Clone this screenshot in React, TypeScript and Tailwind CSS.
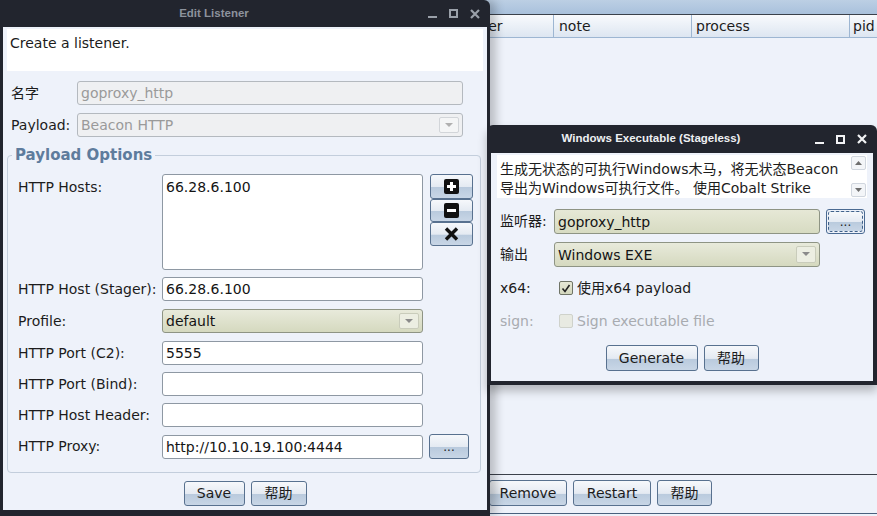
import { ReactNode } from "react";
import clsx from "clsx";
import { twMerge } from "tailwind-merge";

const cn = (...args: Parameters<typeof clsx>) => twMerge(clsx(...args));

const btnBg =
  "bg-[linear-gradient(to_bottom,#f6f8fb_0%,#e4eaf2_52%,#b9cadd_53%,#c8d6e6_100%)]";

const Btn = ({ children, className }: { children: ReactNode; className?: string }) => (
  <div
    className={cn(
      "flex h-[26px] items-center justify-center rounded-[3px] border border-[#58718f] text-[14px] text-[#1c1c1c]",
      btnBg,
      className
    )}
  >
    {children}
  </div>
);

const Field = ({
  value,
  className,
  disabled,
  olive,
}: {
  value?: string;
  className?: string;
  disabled?: boolean;
  olive?: boolean;
}) => (
  <div
    className={cn(
      "flex h-[24px] items-center rounded-[3px] border px-[3px] text-[14px] leading-none",
      disabled
        ? "border-[#b4b9bf] bg-[#eff0f2] text-[#9a9a9a]"
        : olive
        ? "border-[#8e9484] bg-[linear-gradient(to_bottom,#e6e8d6,#d7dbc2)] text-[#141414]"
        : "border-[#8e98a3] bg-white text-[#141414]",
      className
    )}
  >
    {value}
  </div>
);

const Combo = ({
  value,
  className,
  disabled,
}: {
  value: string;
  className?: string;
  disabled?: boolean;
}) => (
  <div
    className={cn(
      "flex h-[24px] items-stretch rounded-[3px] border text-[14px] leading-none",
      disabled
        ? "border-[#b4b9bf] bg-[#eff0f2] text-[#9a9a9a]"
        : "border-[#8e9484] bg-[linear-gradient(to_bottom,#e8eadb,#d5d9bf)] text-[#141414]",
      className
    )}
  >
    <div className="flex flex-1 items-center px-[3px]">{value}</div>
    <div
      className={clsx(
        "my-[3px] mr-[3px] flex w-[20px] items-center justify-center rounded-[2px] border",
        disabled ? "border-[#d2d5d9] bg-[#f4f5f6]" : "border-[#c9ccbb] bg-[#eceee2]"
      )}
    >
      <svg width="8" height="5" viewBox="0 0 8 5">
        <path d="M0 0h8L4 4z" fill={disabled ? "#b0b0b0" : "#8a8a8a"} />
      </svg>
    </div>
  </div>
);

const WinControls = ({ color }: { color: string }) => (
  <div className="flex items-center gap-[12px] pr-[10px]">
    <svg width="9" height="9" viewBox="0 0 9 9">
      <rect x="0" y="7" width="9" height="2" fill={color} />
    </svg>
    <svg width="9" height="9" viewBox="0 0 9 9">
      <rect x="1" y="1" width="7" height="7" fill="none" stroke={color} strokeWidth="2" />
    </svg>
    <svg width="10" height="10" viewBox="0 0 10 10">
      <path d="M1 1l8 8M9 1l-8 8" stroke={color} strokeWidth="2.2" />
    </svg>
  </div>
);

const SquareIcon = ({ kind }: { kind: "plus" | "minus" }) => (
  <svg width="15" height="15" viewBox="0 0 15 15">
    <rect x="0" y="0" width="15" height="15" rx="2" fill="#111" />
    <rect x="3" y="6" width="9" height="3" fill="#fff" />
    {kind === "plus" && <rect x="6" y="3" width="3" height="9" fill="#fff" />}
  </svg>
);

const Row = ({ label, children, className }: { label: string; children: ReactNode; className?: string }) => (
  <div className={clsx("flex items-center", className)}>
    <div className="w-[144px] text-[14px] text-[#1c1c1c]">{label}</div>
    {children}
  </div>
);

const EditListener = () => (
  <div className="absolute left-0 top-0 flex h-[516px] w-[490px] flex-col rounded-tr-[6px] bg-[#22252e] shadow-[6px_0_10px_rgba(0,0,0,0.22)]">
    <div className="flex h-[27px] items-center">
      <div className="flex-1 text-center font-['Liberation_Sans',sans-serif] text-[11.5px] font-bold text-[#8c929c]">
        Edit Listener
      </div>
      <WinControls color="#9aa0a9" />
    </div>
    <div className="mx-[3px] flex h-[483px] flex-col bg-[#eef2fa] px-[4px] pt-[2px]">
      <div className="h-[42px] bg-white px-[3px] pt-[4px] text-[14px] text-[#1c1c1c]">Create a listener.</div>
      <div className="mt-[10px] flex items-center">
        <div className="w-[70px] pl-[4px] text-[14px] text-[#1c1c1c]">名字</div>
        <Field value="goproxy_http" disabled className="w-[386px]" />
      </div>
      <div className="mt-[8px] flex items-center">
        <div className="w-[70px] pl-[4px] text-[14px] text-[#1c1c1c]">Payload:</div>
        <Combo value="Beacon HTTP" disabled className="w-[386px]" />
      </div>
      <div className="relative mr-[2px] mt-[18px] rounded-[4px] border border-[#c3cedc] pb-[13px] pl-[10px] pt-[18px]">
        <div className="absolute -top-[11px] left-[4px] bg-[#eef2fa] px-[3px] text-[15px] font-bold leading-[20px] text-[#5e7c9d]">
          Payload Options
        </div>
        <div className="flex items-start">
          <div className="w-[144px] pt-[3px] text-[14px] text-[#1c1c1c]">HTTP Hosts:</div>
          <div className="h-[96px] w-[261px] rounded-[3px] border border-[#8e98a3] bg-white px-[3px] pt-[2px] text-[14px] text-[#141414]">
            66.28.6.100
          </div>
          <div className="ml-[7px] flex w-[43px] flex-col">
            <Btn className="h-[25px]">
              <SquareIcon kind="plus" />
            </Btn>
            <Btn className="h-[23px]">
              <SquareIcon kind="minus" />
            </Btn>
            <Btn className="h-[24px]">
              <svg width="15" height="14" viewBox="0 0 15 14">
                <path d="M2 1.5l11 11M13 1.5l-11 11" stroke="#111" strokeWidth="3.4" />
              </svg>
            </Btn>
          </div>
        </div>
        <Row label="HTTP Host (Stager):" className="mt-[7px]">
          <Field value="66.28.6.100" className="w-[261px]" />
        </Row>
        <Row label="Profile:" className="mt-[8px]">
          <Combo value="default" className="w-[261px]" />
        </Row>
        <Row label="HTTP Port (C2):" className="mt-[8px]">
          <Field value="5555" className="w-[261px]" />
        </Row>
        <Row label="HTTP Port (Bind):" className="mt-[7px]">
          <Field className="w-[261px]" />
        </Row>
        <Row label="HTTP Host Header:" className="mt-[7px]">
          <Field className="w-[261px]" />
        </Row>
        <Row label="HTTP Proxy:" className="mt-[7px]">
          <Field value="http://10.10.19.100:4444" className="w-[261px]" />
          <Btn className="ml-[6px] h-[25px] w-[40px] text-[12px]">...</Btn>
        </Row>
      </div>
      <div className="mt-[8px] flex justify-center gap-[6px]">
        <Btn className="h-[25px] w-[61px]">Save</Btn>
        <Btn className="h-[25px] w-[56px]">帮助</Btn>
      </div>
    </div>
  </div>
);

const Checkbox = ({ checked, disabled }: { checked?: boolean; disabled?: boolean }) => (
  <div
    className={clsx(
      "flex h-[14px] w-[14px] items-center justify-center rounded-[2px] border",
      disabled ? "border-[#cfd2cb] bg-[#e8eae2]" : "border-[#6f7466] bg-[linear-gradient(to_bottom,#e6e8d6,#d3d7bd)]"
    )}
  >
    {checked && (
      <svg width="10" height="9" viewBox="0 0 10 9">
        <path d="M1.5 4.5l2.5 3L8.5 1" fill="none" stroke="#222" strokeWidth="1.6" />
      </svg>
    )}
  </div>
);

const ScrollArrow = ({ up }: { up?: boolean }) => (
  <div className="flex h-[14px] w-[15px] items-center justify-center rounded-[2px] border border-[#d0d6de] bg-[#f3f5f8]">
    <svg width="7" height="4" viewBox="0 0 7 4">
      <path d={up ? "M0 4h7L3.5 0z" : "M0 0h7L3.5 4z"} fill="#6e6e6e" />
    </svg>
  </div>
);

const WindowsExecutable = () => (
  <div className="absolute left-[487px] top-[125px] flex h-[260px] w-[390px] flex-col rounded-t-[6px] bg-[#22252e] shadow-[0_6px_10px_rgba(0,0,0,0.25)]">
    <div className="flex h-[28px] items-center">
      <div className="flex-1 text-center font-['Liberation_Sans',sans-serif] text-[11.5px] font-bold text-[#eef0f3]">
        Windows Executable (Stageless)
      </div>
      <WinControls color="#f2f3f5" />
    </div>
    <div className="mx-[4px] flex h-[228px] flex-col bg-[#eef2fa] px-[6px] pt-[2px]">
      <div className="flex h-[43px] overflow-hidden bg-white">
        <div className="flex-1 pl-[3px] pt-[5px] text-[14px] leading-[19px] text-[#1c1c1c]">
          <div>生成无状态的可执行Windows木马，将无状态Beacon</div>
          <div>导出为Windows可执行文件。 使用Cobalt Strike</div>
        </div>
        <div className="flex w-[18px] flex-col items-center justify-between py-[1px]">
          <ScrollArrow up />
          <ScrollArrow />
        </div>
      </div>
      <div className="mt-[11px] flex h-[25px] items-center pl-[3px]">
        <div className="w-[54px] text-[14px] text-[#1c1c1c]">监听器:</div>
        <Field value="goproxy_http" olive className="h-[25px] w-[266px]" />
        <div className="ml-[6px] h-[25px] rounded-[3px] border border-[#4a6a92] p-[1px]">
          <Btn className="h-[21px] w-[35px] border-dashed border-[#40618a] text-[12px]">...</Btn>
        </div>
      </div>
      <div className="mt-[8px] flex h-[25px] items-center pl-[3px]">
        <div className="w-[54px] text-[14px] text-[#1c1c1c]">输出</div>
        <Combo value="Windows EXE" className="h-[25px] w-[266px]" />
      </div>
      <div className="mt-[10px] flex h-[22px] items-center pl-[3px]">
        <div className="w-[59px] text-[14px] text-[#1c1c1c]">x64:</div>
        <Checkbox checked />
        <div className="ml-[4px] text-[14px] text-[#1c1c1c]">使用x64 payload</div>
      </div>
      <div className="mt-[11px] flex h-[22px] items-center pl-[3px]">
        <div className="w-[59px] text-[14px] text-[#a8abb0]">sign:</div>
        <Checkbox disabled />
        <div className="ml-[4px] text-[14px] text-[#a8abb0]">Sign executable file</div>
      </div>
      <div className="mt-[13px] flex justify-center gap-[6px]">
        <Btn className="w-[92px]">Generate</Btn>
        <Btn className="w-[55px]">帮助</Btn>
      </div>
    </div>
  </div>
);

export default function App() {
  return (
    <div className="relative h-[516px] w-[877px] overflow-hidden bg-[#eef2fa] font-['DejaVu_Sans','Noto_Sans_CJK_SC',sans-serif]">
      <div className="flex h-full flex-col">
        <div className="h-[14px] bg-[linear-gradient(to_bottom,#bccfe4,#a9c1dc)]" />
        <div className="flex h-[24px] border-b border-t border-b-[#9db6d2] border-t-[#3b414b] bg-[linear-gradient(to_bottom,#f8fafd,#dde6f1)] text-[14px] text-[#1c1c1c]">
          <div className="w-[470px]" />
          <div className="flex w-[84px] items-center border-r border-[#9db6d2] pl-[2px]">user</div>
          <div className="flex w-[138px] items-center border-r border-[#9db6d2] pl-[5px]">note</div>
          <div className="flex w-[158px] items-center border-r border-[#9db6d2] pl-[4px]">process</div>
          <div className="flex flex-1 items-center pl-[3px]">pid</div>
        </div>
        <div className="flex-1" />
        <div className="flex h-[40px] items-start gap-[6px] border-b border-t border-b-[#49617e] border-t-[#3b414b] pl-[489px] pt-[5px]">
          <Btn className="w-[78px]">Remove</Btn>
          <Btn className="w-[78px]">Restart</Btn>
          <Btn className="w-[55px]">帮助</Btn>
        </div>
        <div className="h-[2px]" />
      </div>
      <EditListener />
      <WindowsExecutable />
    </div>
  );
}
